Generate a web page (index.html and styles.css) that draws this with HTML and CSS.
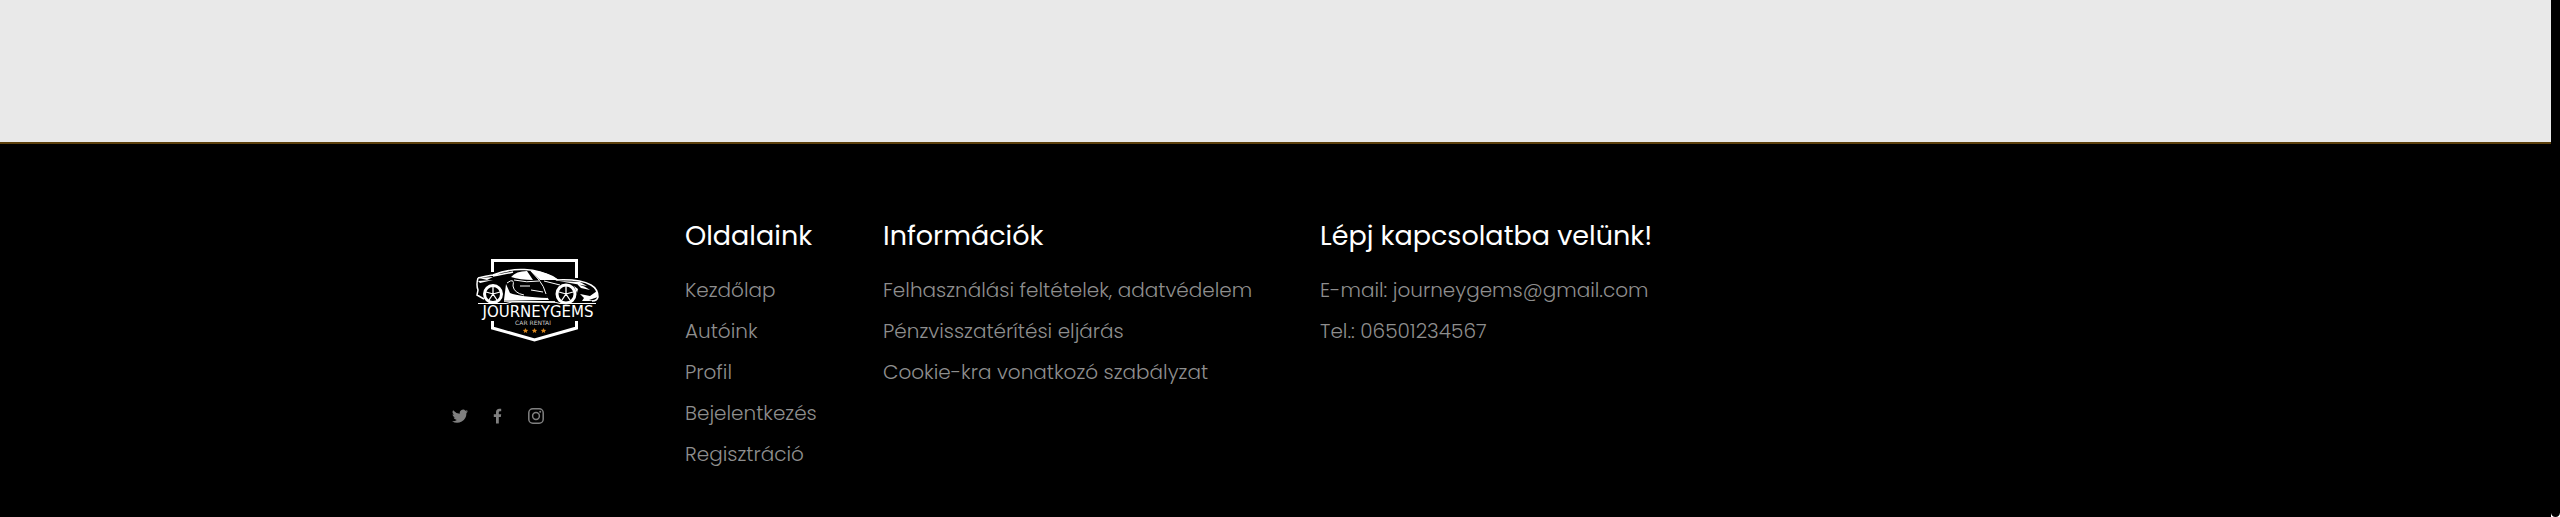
FILE: index.html
```html
<!DOCTYPE html>
<html lang="hu">
<head>
<meta charset="utf-8">
<title>JourneyGems</title>
<link rel="stylesheet" href="styles.css">
</head>
<body>
<div class="page">
<main class="content"></main>
<footer class="footer">
  <div class="brand">
    <svg class="logo" viewBox="0 0 180 120" role="img" aria-label="JourneyGems Car Rental">
      <path d="M52.500 32V20.500H136.500V38M52.500 81V88L94.500 100L136.500 88V81" fill="none" stroke="#fff" stroke-width="3"/>
      <path d="M38 38Q46 36 53 35Q69 29 83 29.500Q100 29 117 40Q140 39 151 45Q158 49 158 57Q157 61 152 61M38 38Q36 45 38 50L37 55L44 59M64 61L115 62M53 36Q70 33 73 32" fill="none" stroke="#fff" stroke-width="1.500"/>
      <path d="M38 63.500H66L72 62H114L120 63.500H156" fill="none" stroke="#fff" stroke-width="1"/>
      <path d="M71 37Q76 31 87 31L93 40Q80 40 71 37ZM90 30.500Q108 31 119 40L100 40ZM39 38L53 37L47 40ZM38 41L53 40L40 43ZM66 44L70 53Q80 57 108 58L105 53L109 60L64 60ZM119 41L140 42L147 46L130 43ZM137 44Q145 46 150 50L141 48ZM140 54L150 56L157 51L158 57L149 60L156 61L142 61L144 58ZM134 46L138 49L137 53Z" fill="#fff"/>
      <path d="M67 43Q75 37 73 46Q74 53 84 55M91 31L99 40Q104 46 106 54M74 40Q87 43 99 41M80 46H90M91 50L103 52M104 41L120 45" fill="none" stroke="#fff" stroke-width="1"/>
      <g fill="#000" stroke="#fff">
        <circle cx="53" cy="54" r="8.500" stroke-width="3"/><circle cx="126" cy="54" r="9" stroke-width="3"/>
        <path d="M53 54V46M53 54L46 52M53 54L60 52M53 54L49 60M53 54L57 60M126 54V46M126 54L119 52M126 54L133 52M126 54L122 60M126 54L130 60" stroke-width="1.300"/>
      </g>
      <text class="logo-name" x="98" y="77">JOURNEYGEMS</text>
      <text class="logo-sub" x="93" y="85">CAR RENTAl</text>
      <g fill="#d9861c"><path id="star" d="M94.500 88l.8 1.700 1.900.2-1.400 1.300.4 1.900-1.700-1-1.700 1 .4-1.900-1.400-1.300 1.900-.2z"/><use href="#star" x="-9"/><use href="#star" x="9"/></g>
    </svg>
    <nav class="social" aria-label="Közösségi média">
      <a href="#" aria-label="Twitter"><svg viewBox="0 0 16 16"><path d="M16 3.200c-.6.300-1.200.4-1.900.5.700-.4 1.200-1 1.400-1.800-.6.400-1.300.6-2.100.8A3.300 3.300 0 0 0 7.800 5.700 9.300 9.300 0 0 1 1.100 2.300a3.300 3.300 0 0 0 1 4.400c-.5 0-1-.2-1.500-.4 0 1.600 1.100 2.900 2.600 3.200-.5.100-1 .1-1.500.1.400 1.300 1.600 2.200 3.100 2.300A6.600 6.600 0 0 1 0 13.200a9.300 9.300 0 0 0 14.400-8.300c.6-.5 1.200-1 1.600-1.700z"/></svg></a>
      <a href="#" aria-label="Facebook"><svg viewBox="0 0 16 16"><path d="M6 15.500V9H3.800V6.200H6V4.300C6 2 7.300.8 9.400.8c.9 0 1.800.1 1.800.1v2.300h-1c-1.100 0-1.400.7-1.400 1.300v1.700h2.400L10.800 9h-2v6.500z"/></svg></a>
      <a href="#" aria-label="Instagram"><svg viewBox="0 0 16 16"><g fill="none" stroke="currentColor" stroke-width="1.500"><rect x=".8" y=".8" width="14.400" height="14.400" rx="4"/><circle cx="8" cy="8" r="3.400"/></g><circle cx="12.200" cy="3.800" r="1"/></svg></a>
    </nav>
  </div>
  <section class="column">
    <h2>Oldalaink</h2>
    <ul><li><a href="#">Kezdőlap</a></li><li><a href="#">Autóink</a></li><li><a href="#">Profil</a></li><li><a href="#">Bejelentkezés</a></li><li><a href="#">Regisztráció</a></li></ul>
  </section>
  <section class="column">
    <h2>Információk</h2>
    <ul><li><a href="#">Felhasználási feltételek, adatvédelem</a></li><li><a href="#">Pénzvisszatérítési eljárás</a></li><li><a href="#">Cookie-kra vonatkozó szabályzat</a></li></ul>
  </section>
  <section class="column">
    <h2>Lépj kapcsolatba velünk!</h2>
    <ul><li><a href="#">E-mail: journeygems@gmail.com</a></li><li><a href="#">Tel.: 06501234567</a></li></ul>
  </section>
</footer>
</div>
<div class="scroll-track"><div class="scroll-thumb"></div></div>
</body>
</html>
```
FILE: styles.css
```css
* { box-sizing: border-box; }
body { display: flex; min-height: 100vh; margin: 0; background: #000; font-family: Poppins, Inter, sans-serif; }
.page { flex: 1; }
.scroll-track { display: flex; width: 9px; background: #fff; }
.scroll-thumb { flex: 1; background: #000; border-radius: 0 0 5px 5px; }
.content { height: 142px; background: #e9e9e9; }
.footer {
  display: grid;
  grid-template-columns: 237px 198px 437px auto;
  padding: 71px 0 36px 448px;
  border-top: 2px solid #5c400c;
  color: #808080;
}
.logo { display: block; width: 180px; height: 120px; margin: 25px 0 0 -8px; }
.logo-name { font: 15px "DejaVu Sans", sans-serif; fill: #fff; text-anchor: middle; }
.logo-sub { font: 6px "DejaVu Sans", sans-serif; fill: #ccc; text-anchor: middle; }
.social { display: flex; gap: 22px; margin: 48px 0 0 4px; }
.social a { color: inherit; }
.social svg { display: block; width: 16px; height: 16px; fill: currentColor; }
h2 { margin: 0 0 18px; color: #fff; font-size: 27px; line-height: 42px; font-weight: 400; white-space: nowrap; }
ul { display: grid; gap: 11px; margin: 0; padding: 0; list-style: none; }
li { color: #8e8e8e; font-size: 20px; font-weight: 300; line-height: 30px; white-space: nowrap; }
li a { color: inherit; text-decoration: none; }
```
